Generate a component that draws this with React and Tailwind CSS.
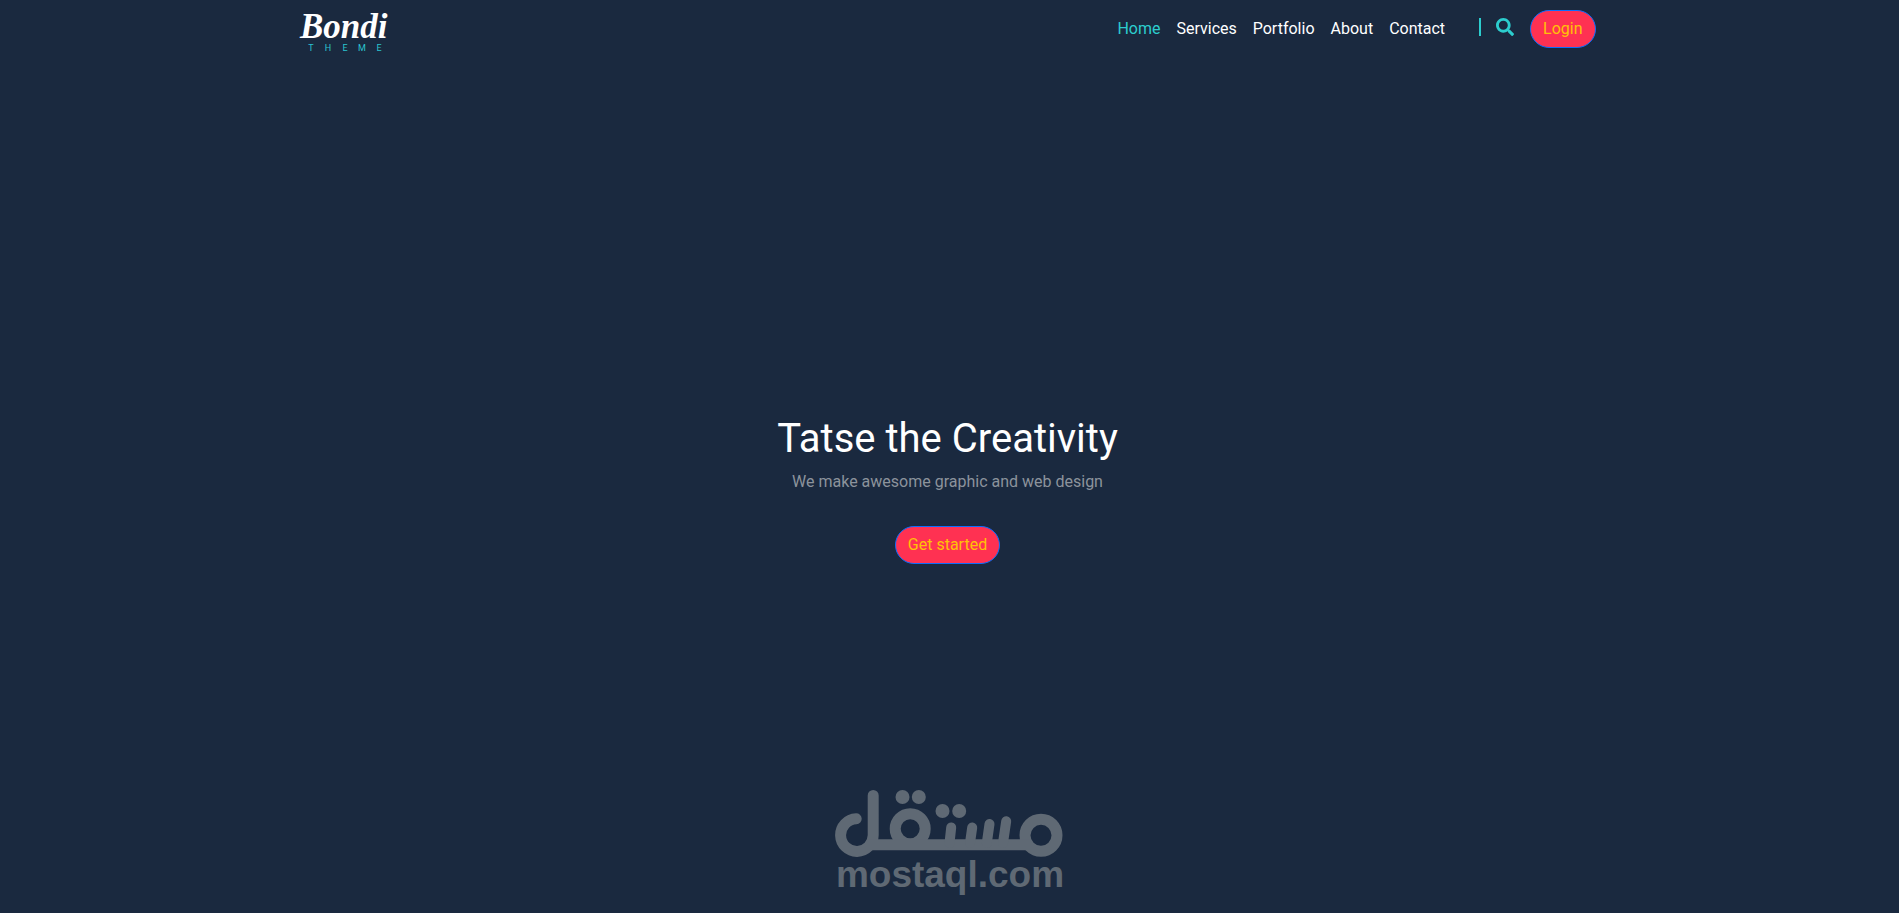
import React from 'react'
import { FaSearch } from 'react-icons/fa'

const navLinks = ['Home', 'Services', 'Portfolio', 'About', 'Contact']

const Logo = () => (
  <a href="#" aria-label="Bondi Theme">
    <svg viewBox="0 0 96 48" className="-ml-0.5 block h-12 w-24">
      <text
        x="2"
        y="33"
        fill="#fff"
        fontSize="35"
        fontWeight="700"
        fontStyle="italic"
        fontFamily="'Liberation Serif', serif"
      >
        Bondi
      </text>
      {'THEME'.split('').map((letter, i) => (
        <text
          key={i}
          x={13 + i * 17}
          y="46"
          fill="#2ac4cf"
          fontSize="9"
          textAnchor="middle"
          fontFamily="Roboto, sans-serif"
        >
          {letter}
        </text>
      ))}
    </svg>
  </a>
)

const Navbar = () => (
  <header className="w-full">
    <div className="mx-auto flex max-w-[1320px] items-center justify-between px-3 pt-[5px]">
      <Logo />
      <nav className="flex items-center">
        <ul className="flex">
          {navLinks.map((link) => (
            <li key={link}>
              <a
                href={`#${link.toLowerCase()}`}
                className={`block p-2 ${link === 'Home' ? 'text-[#2ccdce]' : 'text-white'}`}
              >
                {link}
              </a>
            </li>
          ))}
        </ul>
        <span className="mb-1 ml-[26px] h-[18px] w-0.5 bg-[#2ccdce]" />
        <button type="button" aria-label="Search" className="mb-1 ml-[15px] mr-4 text-lg text-[#2ccdce]">
          <FaSearch />
        </button>
        <button
          type="button"
          className="rounded-full border border-[#0d6efd] bg-[#ff3152] px-3 py-1.5 text-[#ffc107]"
        >
          Login
        </button>
      </nav>
    </div>
  </header>
)

const Hero = () => (
  <main className="flex flex-1 flex-col items-center justify-center pt-[13px] text-center">
    <h1 className="mb-[7px] text-[40px] leading-[48px] text-white">Tatse the Creativity</h1>
    <p className="mb-8 text-[#8c939c]">We make awesome graphic and web design</p>
    <button
      type="button"
      className="rounded-full border border-[#0d6efd] bg-[#ff3152] px-3 py-1.5 text-[#ffc107]"
    >
      Get started
    </button>
  </main>
)

const Watermark = () => (
  <svg
    viewBox="1 0 230 110"
    role="img"
    aria-label="مستقل mostaql.com"
    className="absolute bottom-4 left-1/2 h-[110px] w-[230px] -translate-x-1/2"
  >
    <g fill="none" stroke="#5f6974" strokeWidth="11" strokeLinecap="round">
      <circle cx="207" cy="48.3" r="16" />
      <circle cx="76.2" cy="41.7" r="15" />
      <path d="M22.2 31.8 A16.3 16.3 0 1 0 39.2 48 V8.5" />
      <path d="M34 57.8 H196" strokeLinecap="butt" />
      <path
        d="M117.2 40.5 L115.5 56 M138.2 40.5 L136 56 M155.5 37 L152.8 56 M172.2 34.2 L169 56"
        strokeWidth="10"
      />
    </g>
    <g fill="#5f6974">
      <circle cx="68.5" cy="10" r="7" />
      <circle cx="84.8" cy="10" r="7" />
      <circle cx="108.5" cy="24" r="7" />
      <circle cx="125.2" cy="24" r="7" />
      <text
        x="116"
        y="100"
        fontSize="37"
        fontWeight="700"
        textAnchor="middle"
        fontFamily="'Liberation Sans', sans-serif"
      >
        mostaql.com
      </text>
    </g>
  </svg>
)

const App = () => (
  <div className="relative flex min-h-screen flex-col bg-[#1a293f] pr-1 font-[Roboto,sans-serif] text-base">
    <Navbar />
    <Hero />
    <Watermark />
  </div>
)

export default App
